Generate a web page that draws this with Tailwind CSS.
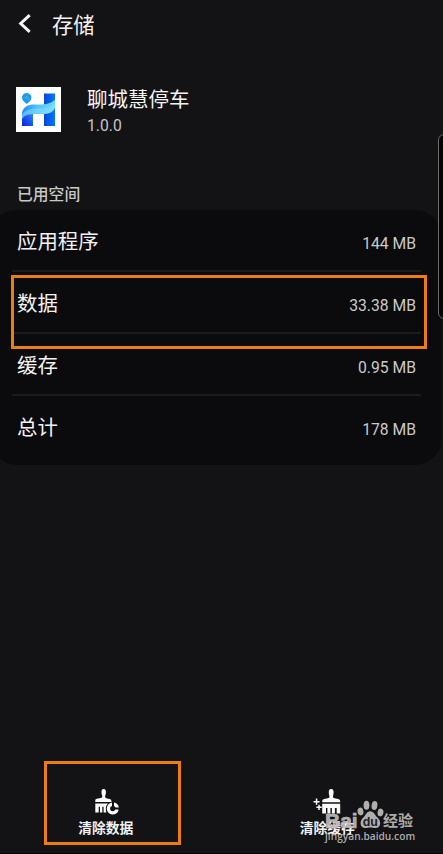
<!DOCTYPE html>
<html lang="zh-CN">
<head>
<meta charset="utf-8">
<title>存储</title>
<script src="https://cdn.jsdelivr.net/npm/@tailwindcss/browser@4"></script>
</head>
<body class="bg-[#131315]">
<main class="relative flex h-[854px] w-[443px] flex-col overflow-hidden bg-[#131315] font-[Roboto,'Noto_Sans_CJK_SC',sans-serif] text-[#f2f2f2]">
  <header class="flex h-[48px] items-center pl-[18px]">
    <svg class="h-[20px] w-[14px]" viewBox="0 0 14 20" fill="none" stroke="#f4f4f4" stroke-width="3"><path d="M11.700 1.200 2.700 9.500l9 8.400"/></svg>
    <h1 class="ml-[20px] font-['Noto_Sans_CJK_SC',sans-serif] text-[21.300px] leading-[48px]">存储</h1>
  </header>

  <section class="mt-[37px] flex h-[50px] pl-[16px]">
    <svg class="mt-[2px] h-[45px] w-[45px] shrink-0" viewBox="0 0 45 45">
      <defs>
        <linearGradient id="wave" x1="0" x2="1"><stop offset="0" stop-color="#1f86f5"/><stop offset=".45" stop-color="#4fc3fb"/><stop offset="1" stop-color="#72dcfc"/></linearGradient>
        <linearGradient id="leg" x1="0" y1="1" x2="1" y2="0"><stop offset="0" stop-color="#0a20d8"/><stop offset="1" stop-color="#2b8cff"/></linearGradient>
        <linearGradient id="bar" x1="0" y1="0" x2="1" y2="0"><stop offset="0" stop-color="#0648d8"/><stop offset="1" stop-color="#0676ff"/></linearGradient>
      </defs>
      <rect width="45" height="45" fill="#fff"/>
      <path d="M28 6.500h11V39H28z" fill="url(#bar)"/>
      <path d="M6 39V31q2-5 11-6v14z" fill="url(#leg)"/>
      <path d="M6 32V26c1-6 6-8.500 12-8.500 10 0 16 0 21-5v8c-2 5-6 6.500-13 6.500-10 0-16-1-20 5z" fill="url(#wave)"/>
      <path d="M6 27.500c3-5 9-6 17-6 8 0 13-1 16-5v4c-2 5-6 6.500-13 6.500-10 0-16-1-20 5z" fill="#8be2ff" fill-opacity=".5"/>
      <path d="M10.700 17 7.300 13.900a4.700 4.700 0 1 1 6.800 0z" fill="#219bef"/>
      <circle cx="10.700" cy="10.700" r="1.800" fill="#35a9f4"/>
    </svg>
    <div class="ml-[26px] flex flex-col pt-px">
      <h2 class="text-[20.500px] leading-[29px]">聊城慧停车</h2>
      <p class="text-[15.700px] leading-[22px] text-[#c5c5c5]">1.0.0</p>
    </div>
  </section>

  <h3 class="mt-[47px] h-[28px] pl-[17px] pt-px text-[15.800px] font-medium leading-[23px] text-[#c8c8c8]">已用空间</h3>

  <section class="-ml-[10px] h-[255px] w-[452px] rounded-[27px] bg-[#0b0b0d] pl-[22px] pr-[21px] pt-px">
    <div class="flex h-[61px] items-center justify-between border-b-2 border-[#1b1b1d] pl-[5px] pr-[5px]">
      <span class="pt-[2px] text-[20.400px] leading-[30px]">应用程序</span><span class="pt-[7px] text-[15.700px] text-[#cacaca]">144 MB</span>
    </div>
    <div class="flex h-[62px] items-center justify-between border-b-2 border-[#1b1b1d] pl-[5px] pr-[5px]">
      <span class="pt-[3px] text-[20.400px] leading-[30px]">数据</span><span class="pt-[7px] text-[15.700px] text-[#cacaca]">33.38 MB</span>
    </div>
    <div class="flex h-[62px] items-center justify-between border-b-2 border-[#1b1b1d] pl-[5px] pr-[5px]">
      <span class="pt-[3px] text-[20.400px] leading-[30px]">缓存</span><span class="pt-[7px] text-[15.700px] text-[#cacaca]">0.95 MB</span>
    </div>
    <div class="flex h-[61px] items-center justify-between pl-[5px] pr-[5px]">
      <span class="pt-[2px] text-[20.400px] leading-[30px]">总计</span><span class="pt-[6px] text-[15.700px] text-[#cacaca]">178 MB</span>
    </div>
  </section>

  <footer class="mt-auto grid h-[66px] grid-cols-2 border-b border-[#090304] text-[13.800px] font-bold leading-[20px]">
    <div class="flex flex-col items-center pr-[10px]">
      <svg class="mr-[2px] h-[30px] w-[28px]" viewBox="0 0 28 30" fill="#fafafa">
        <path d="M11.400 8.500 10.600 5.800Q9.800 1 12.700 1t2.100 4.800L14 8.500Q14 10 16 10.400l2.700.6q1.800.5 1.800 2.400v.5H4.300v-2q0-1 1.500-1.200l3.900-.8q1.700-.3 1.700-1.400z"/>
        <path d="M4.300 15.500h12.700q-2.200 2-2.200 5 0 2 .6 4h-2.800v-5.700h-1.300v5.700H9v-5.700H7.700v5.700H4.300z"/>
        <path d="M21 14.500v3.400a2.700 2.700 0 0 0 .8 5.300 2.700 2.700 0 0 0 2.500-1.800h3.400A6 6 0 1 1 21 14.500zM23 14.500a6 6 0 0 1 4.800 5h-3.300a2.700 2.700 0 0 0-1.500-1.600z"/>
      </svg>
      <span>清除数据</span>
    </div>
    <div class="flex flex-col items-center pr-[10px]">
      <svg class="mr-[2px] h-[30px] w-[36px]" viewBox="0 0 36 30" fill="#fafafa">
        <path d="M21.500 8.700 20.900 5.800Q20.200 1 23.200 1t2.300 4.800L24.900 8.700q0 1.300 1.600 1.600l3.800.7q1.900.4 1.900 2.200v1H14.200v-1q0-1.800 1.900-2.200l3.800-.7q1.600-.3 1.600-1.600z"/>
        <path d="M14.200 15.700h18V25.500h-3.500v-5.500h-1.800v5.500h-3v-5.500h-1.500v5.500h-3v-5.500H18v5.500h-3.800z"/>
        <path d="M7.800 10.600h1.500v2.300h2.300v1.500H9.300v2.300H7.800v-2.300H5.500v-1.500h2.300zM10.300 16.700h1.500v1.900h1.900v1.500h-1.900V22h-1.500v-1.900H8.400v-1.500h1.900z"/>
      </svg>
      <span>清除缓存</span>
    </div>
  </footer>

  <div class="absolute left-[11px] top-[275px] h-[74px] w-[416px] border-[3px] border-[#ec7e0e]"></div>
  <div class="absolute left-[44px] top-[761px] h-[84px] w-[137px] border-[3px] border-[#ec7e0e]"></div>
  <div class="absolute left-[438px] top-[134px] h-[185px] w-[20px] rounded-[6px] border-[1.500px] border-[#6b6b6d] bg-[#040405]"></div>

  <aside class="absolute left-[325px] top-[799px] flex w-[94px] flex-col text-[#c0c0c0]/90">
    <div class="flex h-[31px] items-start">
      <span class="w-[32px] pt-[9px] font-['Liberation_Sans',sans-serif] text-[21px] font-bold leading-[26px] [-webkit-text-stroke:0.7px_#bababa]">Bai</span>
      <svg class="h-[30px] w-[27px]" viewBox="0 0 27 30" fill="currentColor">
        <ellipse cx="3.500" cy="12.500" rx="2.900" ry="3.900" transform="rotate(-12 3.500 12.500)"/>
        <ellipse cx="9.500" cy="6.300" rx="2.900" ry="4.500"/>
        <ellipse cx="17.500" cy="6.500" rx="2.900" ry="4.500" transform="rotate(8 17.500 6.500)"/>
        <ellipse cx="23.500" cy="13.500" rx="2.900" ry="3.900" transform="rotate(12 23.500 13.500)"/>
        <path d="M13.200 12.200c3.500 0 4.800 4 7 6 5 4.500 3.300 10.800-1.600 10.900-2 0-3-.6-5.200-.6s-3.200.6-5.200.6c-5-.1-6.500-6.500-1.700-10.900 2.200-2 3.200-6 6.700-6z"/>
        <text x="13.300" y="26.500" text-anchor="middle" fill="#202022" font-family="Liberation Sans, sans-serif" font-size="12.500" font-weight="700">du</text>
      </svg>
      <span class="-ml-px pt-[10px] text-[15px] font-bold leading-[24px]">经验</span>
    </div>
    <span class="-mt-px whitespace-nowrap font-['Open_Sans',sans-serif] text-[10.200px] font-semibold leading-[14px]">jingyan.baidu.com</span>
  </aside>
</main>
</body>
</html>
